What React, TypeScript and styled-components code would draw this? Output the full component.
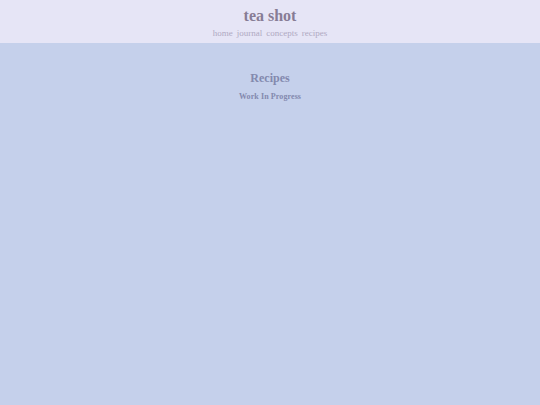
import React from 'react'
import styled, { createGlobalStyle } from 'styled-components'

const GlobalStyle = createGlobalStyle`
  html, body {
    margin: 0;
    padding: 0;
    height: 100%;
    background: #c5d0eb;
  }
  #root {
    min-height: 100vh;
  }
`

export default function App() {
  return (
    <>
      <GlobalStyle />
      <Page>
        <Header>
          <Title>tea shot</Title>
          <Nav>
            <NavLink href="#">home</NavLink>
            <NavLink href="#">journal</NavLink>
            <NavLink href="#">concepts</NavLink>
            <NavLink href="#">recipes</NavLink>
          </Nav>
        </Header>
        <Main>
          <Heading>Recipes</Heading>
          <Note>Work In Progress</Note>
        </Main>
      </Page>
    </>
  )
}

const Page = styled.div`
  min-height: 100vh;
  background: #c5d0eb;
  font-family: 'Liberation Serif', 'DejaVu Serif', serif;
`

const Header = styled.header`
  height: 43px;
  box-sizing: border-box;
  background: #e6e5f6;
  display: flex;
  flex-direction: column;
  align-items: center;
  padding-top: 6px;
`

const Title = styled.h1`
  margin: 0;
  font-size: 16px;
  line-height: 20px;
  font-weight: 700;
  color: #877c95;
`

const Nav = styled.nav`
  display: flex;
  gap: 4px;
  margin-top: 1px;
`

const NavLink = styled.a`
  font-size: 9px;
  line-height: 12px;
  color: #b0a9c2;
  text-decoration: none;
`

const Main = styled.main`
  display: flex;
  flex-direction: column;
  align-items: center;
  padding-top: 27px;
`

const Heading = styled.h2`
  margin: 0;
  font-size: 12px;
  line-height: 16px;
  font-weight: 700;
  color: #8389ae;
`

const Note = styled.p`
  margin: 5px 0 0;
  font-size: 8px;
  line-height: 11px;
  font-weight: 700;
  letter-spacing: 0.1px;
  color: #8389ae;
`
